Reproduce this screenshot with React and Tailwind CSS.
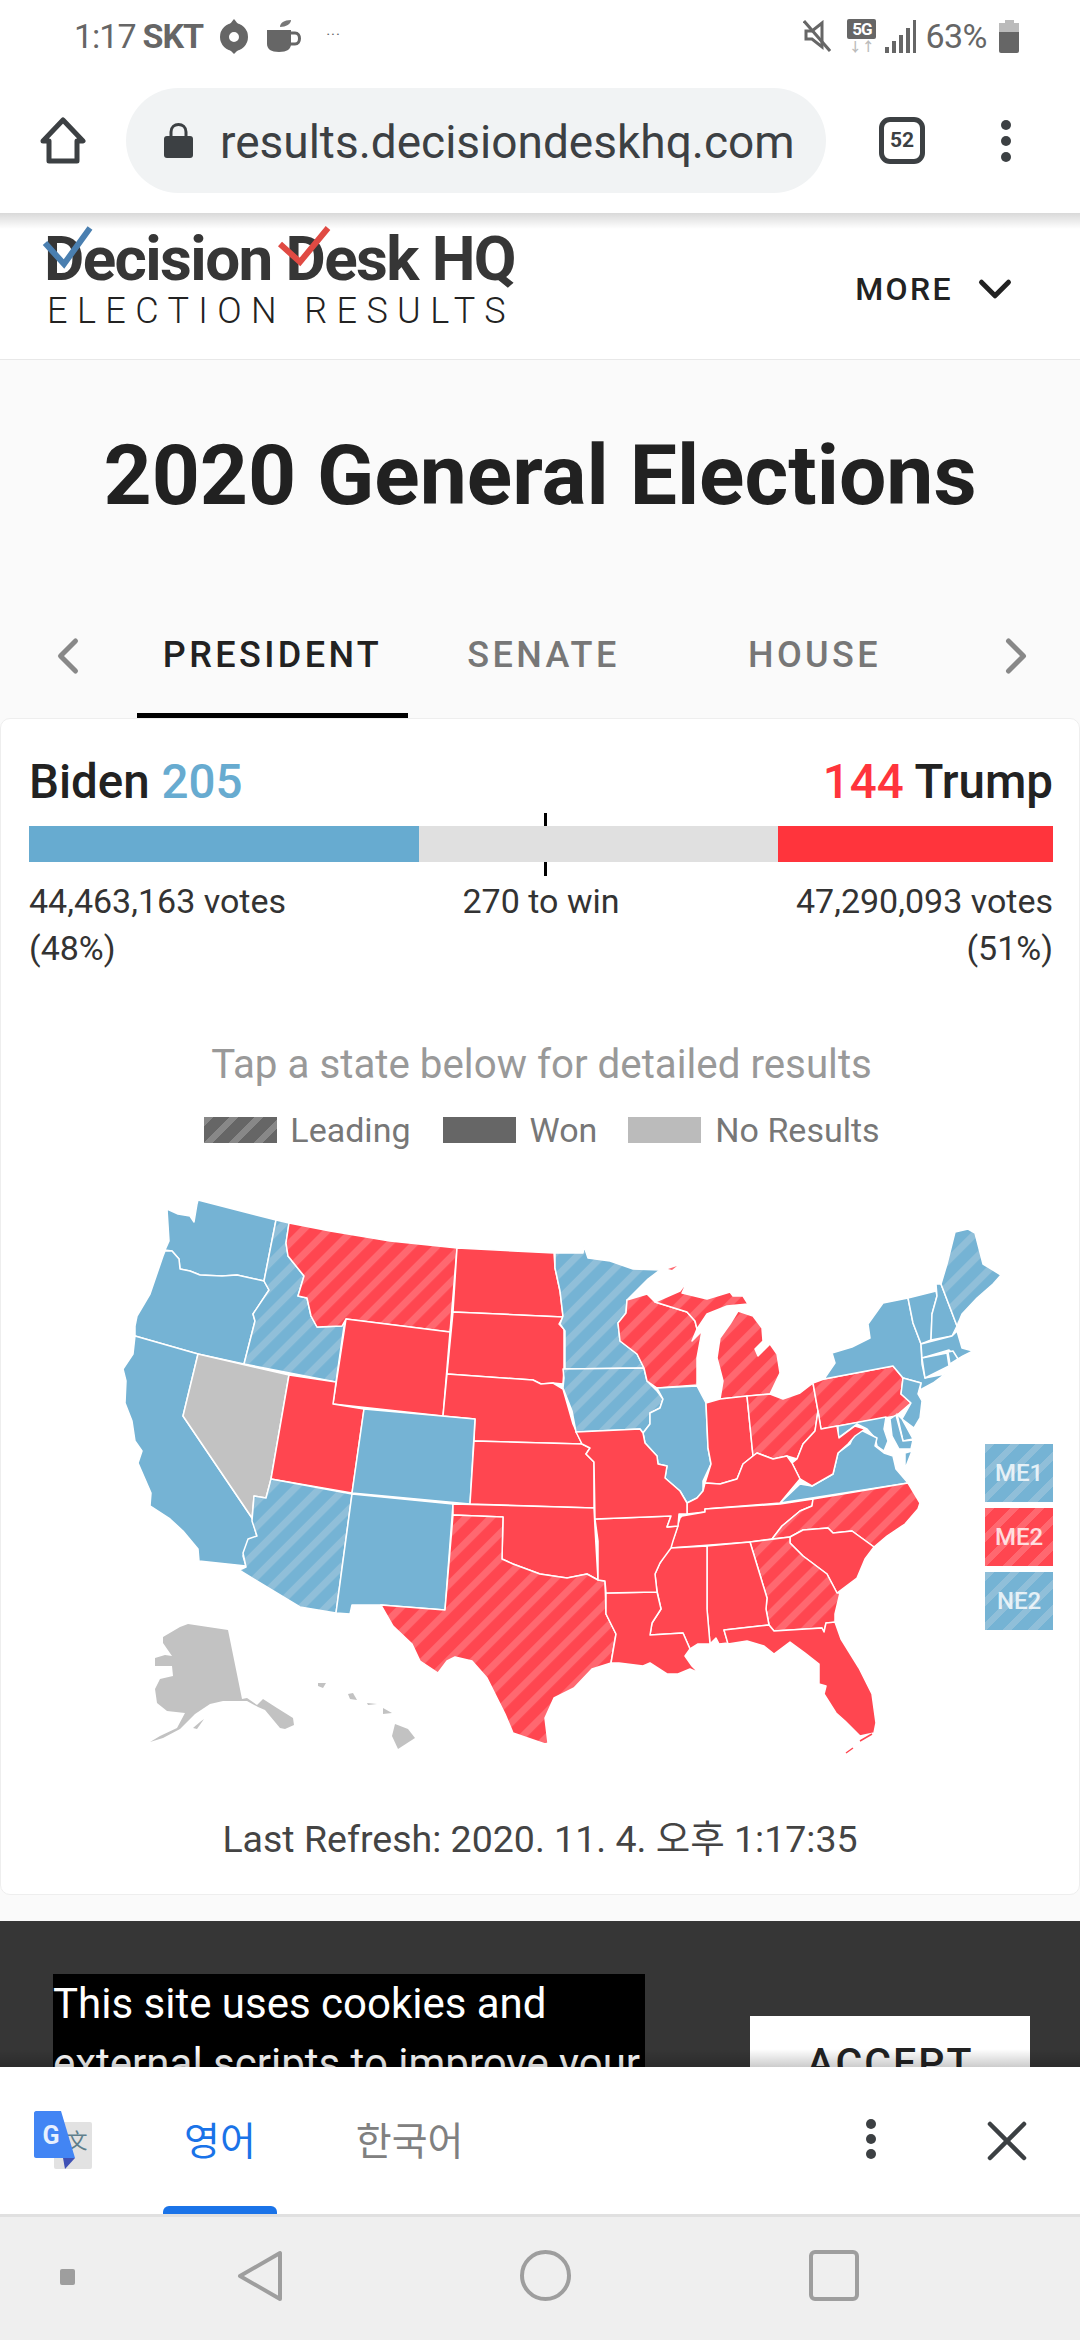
import { ChevronDown, ChevronLeft, ChevronRight, X } from "lucide-react";

// page coordinates, the map svg's viewBox starts at y=1180
const STATES = [
  ["WA", "blue", "198,1199 276,1219 264,1280 237,1274 222,1275 200,1274 190,1270 180,1268 179,1258 172,1250 165,1249 169,1240 167,1208 178,1213 190,1215 194,1221 197,1203"],
  ["OR", "blue", "165,1250 172,1250 179,1258 180,1268 190,1270 200,1274 222,1275 237,1274 264,1280 269,1289 253,1313 255,1320 244,1363 198,1353 135,1335 135,1325 137,1315 150,1293 163,1255"],
  ["CA", "blue", "135,1335 198,1353 183,1415 252,1517 257,1536 248,1542 243,1555 246,1565 199,1560 198,1548 183,1530 170,1518 150,1505 151,1492 138,1462 142,1450 135,1440 132,1420 125,1402 126,1380 123,1368 133,1353"],
  ["NV", "gray", "198,1353 289,1374 271,1478 266,1497 254,1495 252,1517 183,1415"],
  ["ID", "blueHatch", "276,1219 289,1222 286,1242 288,1255 304,1275 298,1295 307,1297 311,1315 317,1326 342,1325 345,1318 336,1381 244,1363 255,1320 253,1313 269,1289 264,1280"],
  ["MT", "redHatch", "289,1222 330,1230 390,1240 457,1247 450,1331 346,1318 342,1325 317,1326 311,1315 307,1297 298,1295 304,1275 288,1255 286,1242"],
  ["ND", "red", "457,1247 554,1252 555,1267 560,1290 563,1316 453,1311"],
  ["SD", "red", "453,1311 563,1316 559,1323 564,1328 564,1368 563,1383 553,1382 541,1383 533,1379 447,1373"],
  ["WY", "red", "346,1318 450,1331 443,1415 333,1403"],
  ["NE", "red", "447,1373 533,1379 541,1383 553,1382 563,1388 573,1423 582,1443 474,1440 475,1418 443,1415"],
  ["UT", "red", "289,1374 336,1381 333,1403 364,1408 352,1492 271,1478"],
  ["CO", "blue", "364,1408 475,1418 470,1503 352,1492"],
  ["AZ", "blueHatch", "271,1478 352,1493 336,1612 300,1606 239,1569 246,1566 243,1552 248,1538 257,1535 252,1520 254,1495 266,1497"],
  ["NM", "blue", "352,1493 453,1503 445,1609 381,1604 352,1604 350,1613 336,1612"],
  ["KS", "red", "474,1440 582,1443 590,1447 586,1453 594,1461 594,1507 470,1503"],
  ["OK", "red", "453,1503 594,1507 595,1527 598,1579 587,1573 567,1577 540,1573 513,1563 502,1558 503,1516 453,1514"],
  ["TX", "redHatch", "453,1514 503,1516 502,1558 513,1563 540,1573 567,1577 587,1573 598,1579 605,1580 606,1613 616,1633 611,1662 592,1668 574,1687 554,1697 545,1717 548,1742 545,1743 513,1732 505,1713 487,1677 472,1660 455,1656 447,1660 438,1672 420,1660 412,1643 393,1625 381,1604 445,1609"],
  ["MN", "blueHatch", "555,1252 583,1252 584,1245 588,1257 610,1260 633,1268 660,1269 648,1278 627,1299 626,1312 618,1322 620,1340 637,1353 644,1367 565,1368 565,1330 560,1323 563,1315 560,1290 555,1267"],
  ["IA", "blueHatch", "563,1368 644,1367 647,1380 657,1390 663,1398 660,1407 650,1412 650,1423 643,1432 640,1428 576,1431 572,1410 563,1387 564,1377"],
  ["WI", "redHatch", "627,1299 647,1293 655,1301 687,1311 695,1320 697,1328 692,1340 702,1330 697,1357 697,1384 657,1387 647,1380 644,1367 637,1353 620,1340 618,1322 626,1312"],
  ["MIU", "redHatch", "655,1301 680,1290 688,1279 682,1292 707,1298 730,1291 733,1295 743,1295 748,1303 727,1305 707,1313 697,1328 695,1320 687,1311"],
  ["MIL", "redHatch", "738,1310 753,1315 762,1327 763,1340 755,1348 758,1355 770,1343 777,1353 780,1372 770,1393 720,1398 723,1380 717,1357 720,1337 730,1323"],
  ["IL", "blue", "657,1387 697,1385 706,1402 708,1447 711,1463 703,1480 703,1490 697,1497 687,1502 680,1490 665,1477 667,1465 658,1463 657,1455 645,1442 643,1432 650,1423 650,1412 660,1407 663,1398"],
  ["IN", "red", "706,1402 720,1398 747,1395 753,1455 743,1463 737,1478 720,1483 705,1482 711,1463 708,1447"],
  ["OH", "redHatch", "747,1395 770,1393 783,1398 800,1392 813,1382 818,1410 815,1430 803,1443 797,1458 787,1455 773,1458 757,1452 753,1455"],
  ["PA", "redHatch", "813,1382 824,1378 893,1365 903,1377 901,1393 911,1402 896,1415 821,1428 818,1410"],
  ["NY", "blue", "824,1378 835,1362 832,1352 852,1346 870,1337 868,1323 883,1302 908,1297 913,1322 921,1343 922,1363 925,1377 945,1373 933,1382 920,1389 921,1382 903,1377 893,1365"],
  ["VT", "blue", "908,1297 936,1290 937,1295 932,1313 931,1339 921,1343 913,1322"],
  ["NH", "blue", "936,1283 941,1283 957,1325 952,1335 931,1339 932,1313 937,1295"],
  ["ME", "blueHatch", "941,1283 947,1263 955,1231 968,1228 975,1232 983,1263 1001,1274 993,1283 977,1297 962,1313 957,1325"],
  ["MA", "blue", "921,1343 952,1335 957,1330 962,1347 973,1350 963,1355 958,1358 949,1349 922,1357"],
  ["CT", "blue", "922,1357 947,1352 949,1365 925,1377"],
  ["RI", "blue", "948,1351 953,1350 958,1358 950,1363"],
  ["NJ", "blue", "903,1377 921,1382 918,1393 922,1400 920,1417 914,1427 902,1418 911,1402 901,1393"],
  ["DE", "blue", "897,1413 902,1418 913,1438 903,1440"],
  ["MD", "blue", "838,1425 886,1416 884,1428 888,1440 884,1450 877,1445 875,1437 867,1428 857,1423 838,1437"],
  ["MDE", "blue", "890,1418 896,1414 903,1440 913,1439 911,1448 899,1448 892,1435"],
  ["VA", "blue", "780,1502 800,1483 812,1485 833,1473 838,1452 850,1443 857,1427 877,1437 875,1445 884,1452 893,1455 896,1468 908,1482"],
  ["VAE", "blue", "905,1452 912,1450 905,1468"],
  ["WV", "red", "818,1410 821,1428 837,1425 839,1437 855,1425 865,1428 855,1435 848,1443 838,1452 833,1473 812,1485 800,1478 792,1462 797,1458 803,1443 815,1430"],
  ["KY", "red", "687,1502 697,1497 703,1490 705,1482 720,1483 737,1478 743,1463 753,1455 757,1452 773,1458 787,1455 792,1462 800,1478 780,1502 705,1508 705,1511 687,1513"],
  ["TN", "red", "682,1515 705,1511 705,1508 780,1503 813,1498 812,1505 800,1510 782,1525 772,1538 750,1541 670,1547 675,1533 680,1517"],
  ["NC", "redHatch", "813,1498 908,1482 920,1502 918,1508 905,1523 887,1535 874,1546 852,1530 833,1532 828,1527 803,1529 790,1536 772,1538 782,1525 800,1510 812,1505"],
  ["SC", "red", "790,1536 803,1529 828,1527 833,1532 852,1530 874,1546 865,1558 857,1577 837,1592 827,1573 803,1555 790,1542"],
  ["GA", "redHatch", "750,1541 790,1536 790,1542 803,1555 827,1573 837,1592 840,1592 835,1613 835,1622 826,1622 824,1631 822,1627 774,1630 769,1624 766,1608 767,1597"],
  ["AL", "red", "707,1545 750,1541 767,1597 766,1608 769,1624 724,1629 728,1642 719,1643 716,1637 710,1643 707,1608"],
  ["MS", "red", "671,1547 707,1545 707,1608 710,1643 698,1643 690,1648 683,1632 650,1634 652,1622 661,1608 657,1590 655,1573 660,1562 667,1550"],
  ["LA", "red", "606,1592 657,1591 661,1608 652,1622 650,1634 683,1632 690,1648 685,1655 692,1665 699,1672 690,1668 678,1673 667,1673 650,1662 643,1665 619,1662 611,1662 616,1633 606,1613"],
  ["AR", "red", "595,1518 671,1515 667,1526 678,1525 673,1540 671,1547 660,1562 655,1573 657,1591 606,1592 605,1580 598,1579 598,1540"],
  ["MO", "red", "576,1431 640,1428 643,1432 645,1442 657,1455 658,1463 667,1465 665,1477 680,1490 687,1502 687,1513 679,1513 678,1525 667,1526 671,1515 595,1518 594,1461 586,1453 590,1447 582,1443"],
  ["FL", "red", "724,1629 769,1624 774,1630 822,1627 824,1631 826,1622 835,1621 841,1638 859,1667 872,1693 876,1722 874,1732 860,1735 845,1720 836,1712 824,1693 826,1685 819,1683 819,1663 805,1652 790,1641 774,1653 764,1645 747,1640 728,1643"],
];

// alaska + hawaii have no outline in the reference
const ISLANDS = [
  "188,1623 228,1629 242,1698 247,1697 257,1704 263,1698 277,1707 293,1717 294,1724 285,1728 280,1727 265,1709 258,1706 247,1700 223,1700 210,1703 195,1713 180,1728 163,1737 150,1741 160,1735 177,1727 185,1712 167,1710 157,1702 155,1688 160,1678 173,1675 172,1665 155,1665 155,1657 165,1654 172,1655 163,1642 163,1636 180,1626",
  "200,1721 204,1718 197,1728 193,1727",
  "395,1723 408,1728 415,1737 398,1748 392,1735",
  "383,1707 392,1712 383,1713",
  "348,1693 353,1692 357,1699 350,1698",
  "318,1682 326,1682 323,1687 318,1685",
  "367,1702 377,1703 368,1704",
];

const FILLS = {
  blue: "#75b3d4",
  red: "#ff4650",
  gray: "#c2c2c2",
  blueHatch: "url(#blueHatch)",
  redHatch: "url(#redHatch)",
};

const UsMap = () => (
  <svg viewBox="0 1180 1080 600" className="block w-[1080px] h-[600px]">
    <defs>
      <pattern id="blueHatch" width="17.7" height="17.7" patternUnits="userSpaceOnUse" patternTransform="rotate(45)">
        <rect width="17.7" height="17.7" fill="#75b3d4" />
        <rect width="7" height="17.7" fill="#90bfd9" />
      </pattern>
      <pattern id="redHatch" width="17.7" height="17.7" patternUnits="userSpaceOnUse" patternTransform="rotate(45)">
        <rect width="17.7" height="17.7" fill="#ff4650" />
        <rect width="7" height="17.7" fill="#ff6870" />
      </pattern>
    </defs>
    {STATES.map(([id, fill, points]) => (
      <polygon key={id} points={points} fill={FILLS[fill]} stroke="#ffffff" strokeWidth="1.5" strokeLinejoin="round" />
    ))}
    {ISLANDS.map((points) => (
      <polygon key={points} points={points} fill="#c2c2c2" />
    ))}
    <polygon points="668,1268 677,1265 672,1269" fill="#ff6870" />
    <path d="M846 1752 L853 1747 M860 1740 L872 1733" fill="none" stroke="#ff4650" strokeWidth="1.5" />
  </svg>
);

const Badge = ({ label, red }) => (
  <div
    className={
      "w-[68px] h-[58px] flex items-center justify-center text-[24px] font-medium text-white/80 " +
      (red
        ? "bg-[repeating-linear-gradient(135deg,#ff6870_0,#ff6870_7px,#ff4650_7px,#ff4650_17.7px)]"
        : "bg-[repeating-linear-gradient(135deg,#90bfd9_0,#90bfd9_7px,#75b3d4_7px,#75b3d4_17.7px)]")
    }
  >
    {label}
  </div>
);

const StatusBar = () => (
  <div className="h-[70px] bg-white flex items-center pl-[74px] pr-[61px] text-[#666666] text-[34px] pt-[2px]">
    <span className="tracking-[-1px]">1:17</span>
    <span className="ml-[7px] font-bold tracking-[-1px]">SKT</span>
    <svg viewBox="0 0 28 35" className="ml-[17px] w-[28px] h-[35px]">
      <path d="M10 5L14 0L18 5Z" fill="#666666" />
      <path d="M10 31H18L14 35Z" fill="#666666" />
      <circle cx="14" cy="18" r="9.5" fill="none" stroke="#666666" strokeWidth="9" />
    </svg>
    <svg viewBox="0 0 34 32" className="ml-[19px] w-[34px] h-[32px]">
      <path d="M13 7C13 3 17 0 24 0C24 4 19 7 13 7Z" fill="#777777" />
      <path d="M0 10H24V24C24 29 20 32 12 32C4 32 0 29 0 24Z" fill="#666666" />
      <path d="M24 13H28C34 13 34 24 28 24H23" fill="none" stroke="#666666" strokeWidth="3" />
    </svg>
    <span className="ml-[25px] -mt-[2px] text-[15px] leading-none tracking-[1px]">···</span>
    <div className="flex-1" />
    <svg viewBox="0 0 28 32" className="w-[28px] h-[32px]">
      <path d="M3 11H9L19 3V27L9 19H3Z" fill="none" stroke="#666666" strokeWidth="3" />
      <path d="M1 1L27 31" stroke="#666666" strokeWidth="3" />
    </svg>
    <div className="ml-[16px] w-[29px] h-[34px] flex flex-col items-center">
      <div className="w-[29px] h-[20px] bg-[#666666] rounded-[2px] text-white text-[17px] leading-[20px] font-bold text-center tracking-[-1px]">5G</div>
      <div className="mt-[2px] text-[#bbbbbb] text-[13px] leading-[12px] font-bold">↓↑</div>
    </div>
    <svg viewBox="0 0 32 34" className="ml-[8px] w-[32px] h-[34px]">
      <path d="M1 34V28H5V34ZM8 34V22H12V34ZM15 34V16H19V34Z" fill="#666666" />
      <path d="M22 34V9H26V34ZM29 34V1H32V34Z" fill="#666666" />
    </svg>
    <span className="ml-[9px] tracking-[-0.5px]">63%</span>
    <div className="ml-[12px] w-[20px] h-[33px] flex flex-col items-center">
      <div className="w-[9px] h-[3px] bg-[#bbbbbb]" />
      <div className="w-[20px] h-[9px] bg-[#bbbbbb]" />
      <div className="w-[20px] h-[21px] bg-[#666666] rounded-b-[2px]" />
    </div>
  </div>
);

const UrlBar = () => (
  <div className="h-[143px] bg-white flex items-start pt-[18px] relative z-10">
    <svg viewBox="0 0 46 47" className="ml-[40px] mt-[29px] w-[46px] h-[47px]">
      <path d="M23 3L43 24H37V44H9V24H3Z" fill="none" stroke="#3c4043" strokeWidth="5" strokeLinejoin="round" />
    </svg>
    <div className="ml-[40px] w-[700px] h-[105px] rounded-full bg-[#f1f3f4] flex items-center">
      <svg viewBox="0 0 29 35" className="ml-[38px] w-[29px] h-[35px]">
        <path d="M7 14V9C7 -1 22 -1 22 9V14" fill="none" stroke="#3c4043" strokeWidth="3" />
        <rect x="0" y="13" width="29" height="22" rx="3" fill="#3c4043" />
      </svg>
      <span className="ml-[27px] mt-[2px] text-[46px] text-[#3c4043] leading-none whitespace-nowrap">results.decisiondeskhq.com</span>
    </div>
    <div className="ml-[53px] mt-[29px] w-[46px] h-[47px] rounded-[11px] border-[5px] border-[#3c4043] flex items-center justify-center text-[#3c4043] text-[21px] font-bold leading-none">
      52
    </div>
    <div className="ml-[76px] mt-[32px] flex flex-col gap-[6px]">
      <div className="w-[10px] h-[10px] rounded-full bg-[#3c4043]" />
      <div className="w-[10px] h-[10px] rounded-full bg-[#3c4043]" />
      <div className="w-[10px] h-[10px] rounded-full bg-[#3c4043]" />
    </div>
  </div>
);

const Logo = () => (
  <div className="relative ml-[44px] mt-[16px] w-[470px]">
    <div className="text-[62px] leading-[60px] font-bold text-[#363636] tracking-[-1.6px] whitespace-nowrap">Decision Desk HQ</div>
    <svg viewBox="0 0 300 45" className="absolute left-[-2px] top-[-3px] w-[300px] h-[45px]">
      <path d="M3 17L22 38L48 2" fill="none" stroke="#4a7fb0" strokeWidth="6" />
      <path d="M238 18L258 36L286 2" fill="none" stroke="#e04a43" strokeWidth="6" />
    </svg>
    <div className="mt-[4px] ml-[3px] text-[36px] leading-[36px] font-light text-[#222222] tracking-[9.4px] whitespace-nowrap">ELECTION RESULTS</div>
  </div>
);

const Tabs = () => (
  <div className="h-[98px] flex items-start text-[36px] font-medium tracking-[3.4px] text-[#777777] text-center">
    <ChevronLeft className="ml-[38px] mt-[6px] w-[60px] h-[60px] text-[#888888]" strokeWidth={2} />
    <div className="ml-[39px] w-[271px] h-[98px] border-b-[5px] border-black pt-[13px] leading-[44px] text-[#222222]">PRESIDENT</div>
    <div className="w-[271px] pt-[13px] leading-[44px]">SENATE</div>
    <div className="w-[271px] pt-[13px] leading-[44px]">HOUSE</div>
    <ChevronRight className="ml-[36px] mt-[6px] w-[60px] h-[60px] text-[#888888]" strokeWidth={2} />
  </div>
);

const Scoreboard = () => (
  <div className="pl-[28px] pr-[26px] pt-[33px]">
    <div className="flex justify-between h-[60px] text-[47.5px] leading-[60px] font-medium text-[#222222]">
      <div>
        Biden <span className="text-[#67abd0]">205</span>
      </div>
      <div>
        <span className="text-[#ff343c]">144</span> Trump
      </div>
    </div>
    <div className="relative mt-[14px] h-[36px] flex">
      <div className="w-[390px] bg-[#67abd0]" />
      <div className="flex-1 bg-[#e0e0e0]" />
      <div className="w-[275px] bg-[#ff343c]" />
      <div className="absolute left-[515px] top-[-13px] w-[3px] h-[13px] bg-black" />
      <div className="absolute left-[515px] bottom-[-14px] w-[3px] h-[14px] bg-black" />
    </div>
    <div className="mt-[16px] flex justify-between text-[34px] leading-[47px] text-[#333333]">
      <div>
        44,463,163 votes
        <br />
        (48%)
      </div>
      <div>270 to win</div>
      <div className="text-right">
        47,290,093 votes
        <br />
        (51%)
      </div>
    </div>
  </div>
);

const Legend = () => (
  <div className="mt-[20px] h-[40px] flex items-center justify-center pl-[4px] text-[34px] text-[#777777]">
    <div className="w-[73px] h-[26px] bg-[repeating-linear-gradient(135deg,#888888_0,#888888_7px,#666666_7px,#666666_17.7px)]" />
    <span className="ml-[13px]">Leading</span>
    <div className="ml-[32px] w-[73px] h-[26px] bg-[#666666]" />
    <span className="ml-[14px]">Won</span>
    <div className="ml-[31px] w-[73px] h-[26px] bg-[#bbbbbb]" />
    <span className="ml-[14px]">No Results</span>
  </div>
);

const TranslateBar = () => (
  <div className="relative h-[147px] bg-white flex items-start shrink-0">
    <svg viewBox="0 0 58 58" className="ml-[34px] mt-[44px] w-[58px] h-[58px]">
      <rect x="20" y="11" width="38" height="47" rx="2" fill="#e2e2e2" />
      <text x="43" y="37" textAnchor="middle" fontSize="21" fill="#5f7f8c" fontFamily="'Noto Sans CJK SC', sans-serif">文</text>
      <path d="M2 0H27L41 47H2C1 47 0 46 0 45V2C0 1 1 0 2 0Z" fill="#4285f4" />
      <path d="M29 47H41L31 58Z" fill="#3f51b5" />
      <text x="17" y="33" textAnchor="middle" fontSize="25" fontWeight="700" fill="#e8f0fe">G</text>
    </svg>
    <span className="ml-[92px] mt-[52px] text-[39px] leading-[46px] text-[#1a73e8]">영어</span>
    <span className="ml-[100px] mt-[52px] text-[39px] leading-[46px] text-[#808080]">한국어</span>
    <div className="absolute left-[866px] top-[52px] flex flex-col gap-[5px]">
      <div className="w-[10px] h-[10px] rounded-full bg-[#3c4043]" />
      <div className="w-[10px] h-[10px] rounded-full bg-[#3c4043]" />
      <div className="w-[10px] h-[10px] rounded-full bg-[#3c4043]" />
    </div>
    <X className="absolute left-[973px] top-[40px] w-[68px] h-[68px] text-[#3c4043]" strokeWidth={1.6} />
    <div className="absolute left-[163px] bottom-0 w-[114px] h-[8px] bg-[#1a73e8] rounded-t-[6px]" />
  </div>
);

const NavBar = () => (
  <div className="flex-1 bg-[#efefef] border-t-[3px] border-[#e0e0e0] flex items-start">
    <div className="ml-[60px] mt-[52px] w-[15px] h-[16px] rounded-[2px] bg-[#9e9e9e]" />
    <svg viewBox="0 0 46 52" className="ml-[162px] mt-[33px] w-[46px] h-[52px]">
      <path d="M43 3V49L3 26Z" fill="none" stroke="#9e9e9e" strokeWidth="4" strokeLinejoin="round" />
    </svg>
    <div className="ml-[237px] mt-[33px] w-[51px] h-[51px] rounded-full border-[4px] border-[#9e9e9e]" />
    <div className="ml-[238px] mt-[33px] w-[50px] h-[51px] rounded-[6px] border-[4px] border-[#9e9e9e]" />
  </div>
);

export default function App() {
  return (
    <div className="w-[1080px] h-[2340px] overflow-hidden flex flex-col bg-[#fafafa] font-['Roboto','Noto_Sans_CJK_KR',sans-serif]">
      <StatusBar />
      <UrlBar />
      <header className="relative h-[147px] shrink-0 bg-white border-b border-[#e8e8e8] flex items-start">
        <div className="absolute inset-x-0 top-0 h-[16px] bg-gradient-to-b from-black/15 to-transparent" />
        <Logo />
        <div className="flex-1" />
        <div className="mt-[49px] mr-[58px] flex items-center text-[32px] font-medium text-[#222222] tracking-[2.4px]">
          MORE
          <ChevronDown className="ml-[15px] w-[54px] h-[54px]" strokeWidth={2.2} />
        </div>
      </header>
      <h1 className="h-[260px] shrink-0 pt-[71px] text-center text-[84px] leading-[90px] font-bold text-[#212121]">2020 General Elections</h1>
      <Tabs />
      <section className="h-[1177px] shrink-0 bg-white border border-[#eeeeee] rounded-[10px]">
        <Scoreboard />
        <div className="mt-[68px] h-[50px] pl-[3px] text-center text-[40.3px] leading-[50px] text-[#999999]">Tap a state below for detailed results</div>
        <Legend />
        <div className="relative mt-[31px] -ml-px">
          <UsMap />
          <div className="absolute left-[985px] top-[263px] flex flex-col gap-[6px]">
            <Badge label="ME1" />
            <Badge label="ME2" red />
            <Badge label="NE2" />
          </div>
        </div>
        <div className="mt-[33px] h-[50px] text-center text-[37.5px] leading-[50px] text-[#444444]">Last Refresh: 2020. 11. 4. 오후 1:17:35</div>
      </section>
      <div className="h-[26px] shrink-0" />
      <footer className="relative h-[146px] shrink-0 overflow-hidden bg-[#363636] flex items-start">
        <div className="ml-[53px] mt-[53px] w-[592px] bg-black text-white text-[42px] leading-[60px]">
          This site uses cookies and external scripts to improve your
        </div>
        <div className="ml-[105px] mt-[95px] w-[280px] h-[95px] bg-white flex items-center justify-center text-[41px] font-medium text-[#222222] tracking-[2px]">ACCEPT</div>
        <div className="absolute inset-x-0 bottom-0 h-[18px] bg-gradient-to-b from-transparent to-black/20" />
      </footer>
      <TranslateBar />
      <NavBar />
    </div>
  );
}
